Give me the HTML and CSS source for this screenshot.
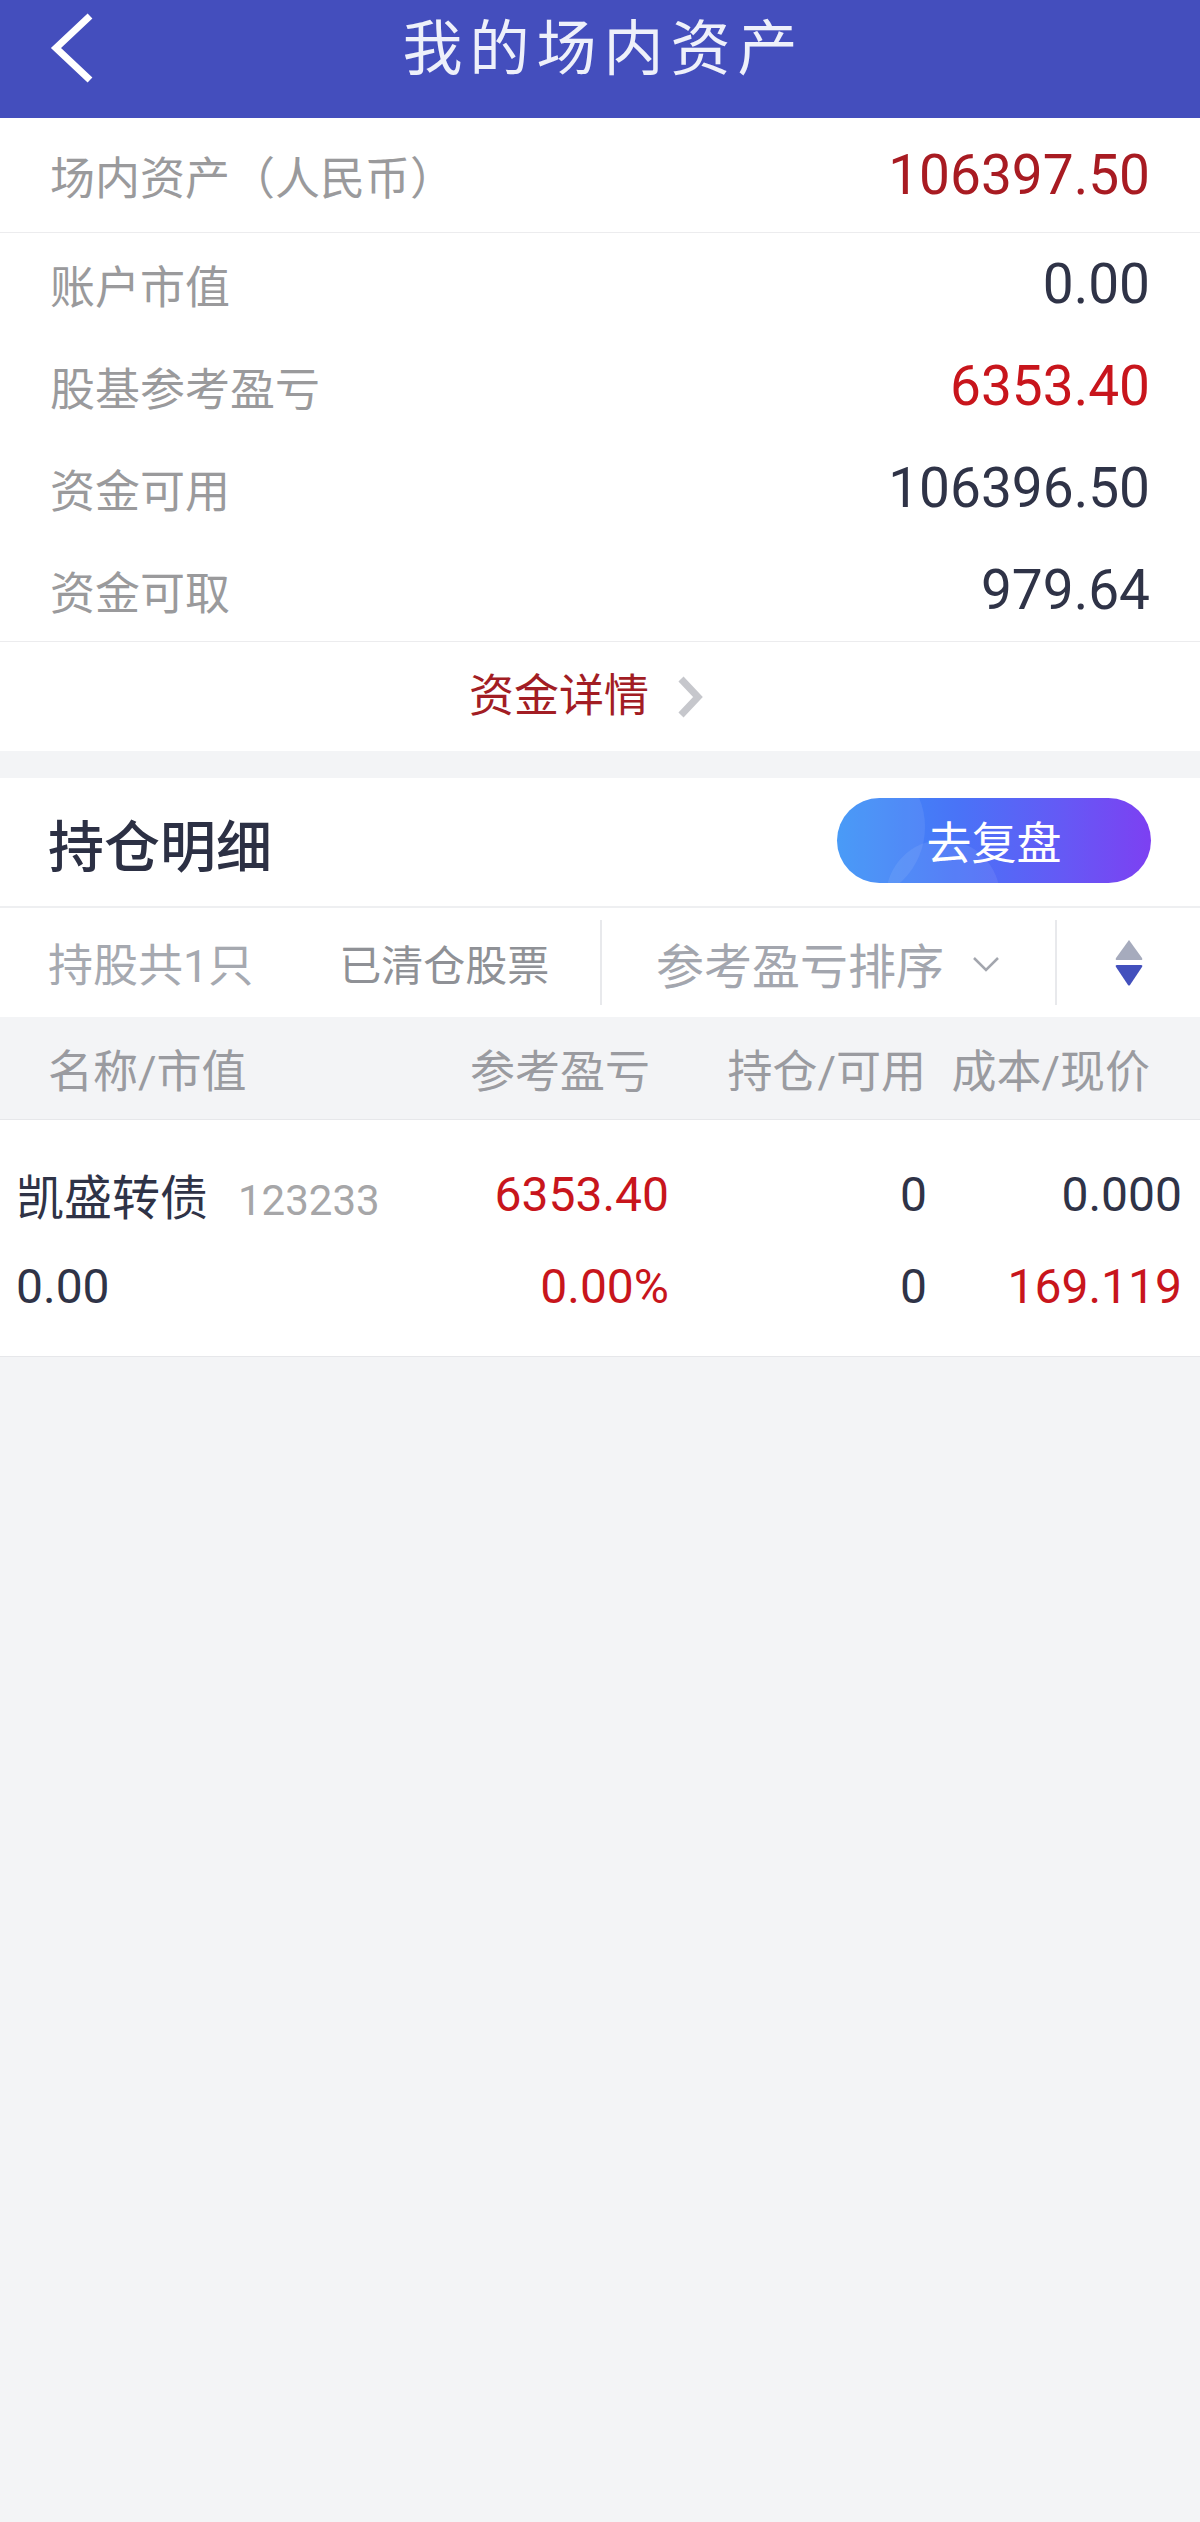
FILE: index.html
```
<!DOCTYPE html>
<html>
<head>
  <meta charset="utf-8">
  <title>我的场内资产</title>
  <link rel="stylesheet" href="styles.css">
</head>
<body>
  <div class="topbar">
    <a class="back" href="#">
      <svg width="48" height="72" viewBox="0 0 48 72">
        <polyline points="40,4 6,36 40,68" fill="none" stroke="#fff" stroke-width="7"/>
      </svg>
    </a>
    <h1>我的场内资产</h1>
    <span></span>
  </div>

  <section class="assets">
    <div class="asset-total">
      <span class="label">场内资产（人民币）</span>
      <span class="value deep-red">106397.50</span>
    </div>
    <div class="asset-list">
      <div class="asset-row">
        <span class="label">账户市值</span>
        <span class="value">0.00</span>
      </div>
      <div class="asset-row">
        <span class="label">股基参考盈亏</span>
        <span class="value red">6353.40</span>
      </div>
      <div class="asset-row">
        <span class="label">资金可用</span>
        <span class="value">106396.50</span>
      </div>
      <div class="asset-row">
        <span class="label">资金可取</span>
        <span class="value">979.64</span>
      </div>
    </div>
    <a class="detail-link" href="#">
      资金详情
      <svg width="26" height="42" viewBox="0 0 26 42">
        <polyline points="4,3 21,21 4,39" fill="none" stroke="#c6c7cc" stroke-width="7"/>
      </svg>
    </a>
  </section>

  <section class="holdings">
    <div class="holdings-head">
      <h2>持仓明细</h2>
      <button class="replay" type="button">去复盘</button>
    </div>

    <div class="filter-bar">
      <div class="filter-tabs">
        <span class="tab-count">持股共1只</span>
        <span class="tab-cleared">已清仓股票</span>
      </div>
      <div class="filter-sort">
        <span>参考盈亏排序</span>
        <svg width="28" height="16" viewBox="0 0 28 16">
          <polyline points="2,2 14,14 26,2" fill="none" stroke="#a3a6ae" stroke-width="2.5"/>
        </svg>
      </div>
      <div class="filter-order">
        <svg width="30" height="48" viewBox="0 0 30 48">
          <path d="M15 1 L28 19 Q29 21 27 21 L3 21 Q1 21 2 19 Z" fill="#a6abbd"/>
          <path d="M3 26 L27 26 Q29 26 28 28 L16 46 Q15 47 14 46 L2 28 Q1 26 3 26 Z" fill="#4350bd"/>
        </svg>
      </div>
    </div>

    <div class="table-head">
      <span>名称/市值</span>
      <span class="num">参考盈亏</span>
      <span class="num">持仓/可用</span>
      <span class="num">成本/现价</span>
    </div>

    <div class="pos-row">
      <div class="pos-name">凯盛转债<span class="pos-code">123233</span></div>
      <div class="num red">6353.40</div>
      <div class="num">0</div>
      <div class="num">0.000</div>
      <div>0.00</div>
      <div class="num red">0.00%</div>
      <div class="num">0</div>
      <div class="num red">169.119</div>
    </div>
  </section>
</body>
</html>
```

FILE: styles.css
```
/* Default styles */

html {
    background: #f3f4f6;
}

body {
    margin: 0;
    padding: 0;
    min-height: 2522px;
    background: #f3f4f6;
    font-family: Roboto, "Noto Sans CJK SC", sans-serif;
    color: #2f3347;
}

/* top bar */

.topbar {
    display: grid;
    grid-template-columns: 1fr auto 1fr;
    height: 118px;
    background: #444ebd;
}

.topbar .back {
    align-self: start;
    margin: 12px 0 0 50px;
    width: 48px;
    height: 72px;
}

.topbar .back svg {
    display: block;
}

.topbar h1 {
    margin: 0;
    font-size: 60px;
    font-weight: 400;
    line-height: 100px;
    letter-spacing: 7px;
    margin-right: -7px;
    color: #eef0fa;
}

/* asset summary */

.assets {
    background: #fff;
    margin-bottom: 27px;
}

.asset-total,
.asset-row {
    display: flex;
    align-items: center;
    justify-content: space-between;
    padding: 0 50px;
}

.asset-total {
    height: 114px;
    border-bottom: 1px solid #ececee;
}

.asset-row {
    height: 102px;
}

.label {
    font-size: 45px;
    color: #9a9a9c;
}

.value {
    font-size: 55px;
    color: #2f3347;
}

.deep-red {
    color: #a81b22;
}

.red {
    color: #c8151c;
}

.detail-link {
    display: flex;
    align-items: center;
    justify-content: center;
    gap: 28px;
    height: 110px;
    padding-right: 28px;
    padding-bottom: 8px;
    box-sizing: border-box;
    border-top: 1px solid #ececee;
    font-size: 45px;
    color: #a21d24;
    text-decoration: none;
}

.detail-link svg {
    margin-top: 8px;
}

/* holdings */

.holdings {
    background: #fff;
}

.holdings-head {
    display: flex;
    align-items: center;
    justify-content: space-between;
    height: 128px;
    padding: 0 49px 0 48px;
    border-bottom: 2px solid #eeeff1;
}

.holdings-head h2 {
    margin: 0;
    font-size: 56px;
    font-weight: 500;
    color: #2c3044;
}

.replay {
    position: relative;
    overflow: hidden;
    width: 314px;
    height: 85px;
    margin-top: -4px;
    border: none;
    border-radius: 43px;
    padding: 0;
    background: linear-gradient(90deg, #3a93f7 0%, #4a72f7 40%, #6559f5 72%, #7d40f2 100%);
    font-family: Roboto, "Noto Sans CJK SC", sans-serif;
    font-size: 45px;
    color: #fff;
}

.replay span,
.replay {
    z-index: 0;
}

.replay:before,
.replay:after {
    content: '';
    position: absolute;
    z-index: -1;
    border-radius: 50%;
    background: rgba(255, 255, 255, .08);
}

.replay:before {
    top: -46px;
    left: -62px;
    width: 150px;
    height: 150px;
}

.replay:after {
    top: 42px;
    left: 49px;
    width: 114px;
    height: 114px;
}

.filter-bar {
    display: flex;
    align-items: center;
    height: 109px;
}

.filter-tabs {
    display: flex;
    align-items: center;
    gap: 86px;
    width: 552px;
    padding-left: 48px;
    height: 85px;
    border-right: 2px solid #e8e9ec;
}

.tab-count {
    font-size: 45px;
    color: #a6a9b0;
}

.tab-cleared {
    font-size: 42px;
    color: #8f9196;
}

.filter-sort {
    display: flex;
    align-items: center;
    gap: 28px;
    width: 399px;
    padding-left: 54px;
    height: 85px;
    border-right: 2px solid #e8e9ec;
    font-size: 48px;
    color: #a3a6ae;
}

.filter-sort svg {
    margin-top: 2px;
}

.filter-order {
    flex: 1;
    display: flex;
    justify-content: center;
}

.table-head {
    display: grid;
    grid-template-columns: 400px 202px 276px 224px;
    align-items: center;
    height: 102px;
    padding: 0 50px 0 48px;
    background: #f3f4f6;
    border-bottom: 1px solid #e6e7ea;
    font-size: 45px;
    color: #9a9ba0;
}

.num {
    text-align: right;
}

.pos-row {
    display: grid;
    grid-template-columns: 400px 253px 258px 255px;
    grid-auto-rows: 92px;
    align-items: center;
    padding: 28px 18px 24px 16px;
    border-bottom: 1px solid #e6e7ea;
    font-size: 48px;
    color: #2f3347;
}

.pos-row .red {
    color: #c8151c;
}

.pos-name {
    white-space: nowrap;
}

.pos-code {
    margin-left: 30px;
    font-size: 42px;
    color: #a6a6a8;
}
```
